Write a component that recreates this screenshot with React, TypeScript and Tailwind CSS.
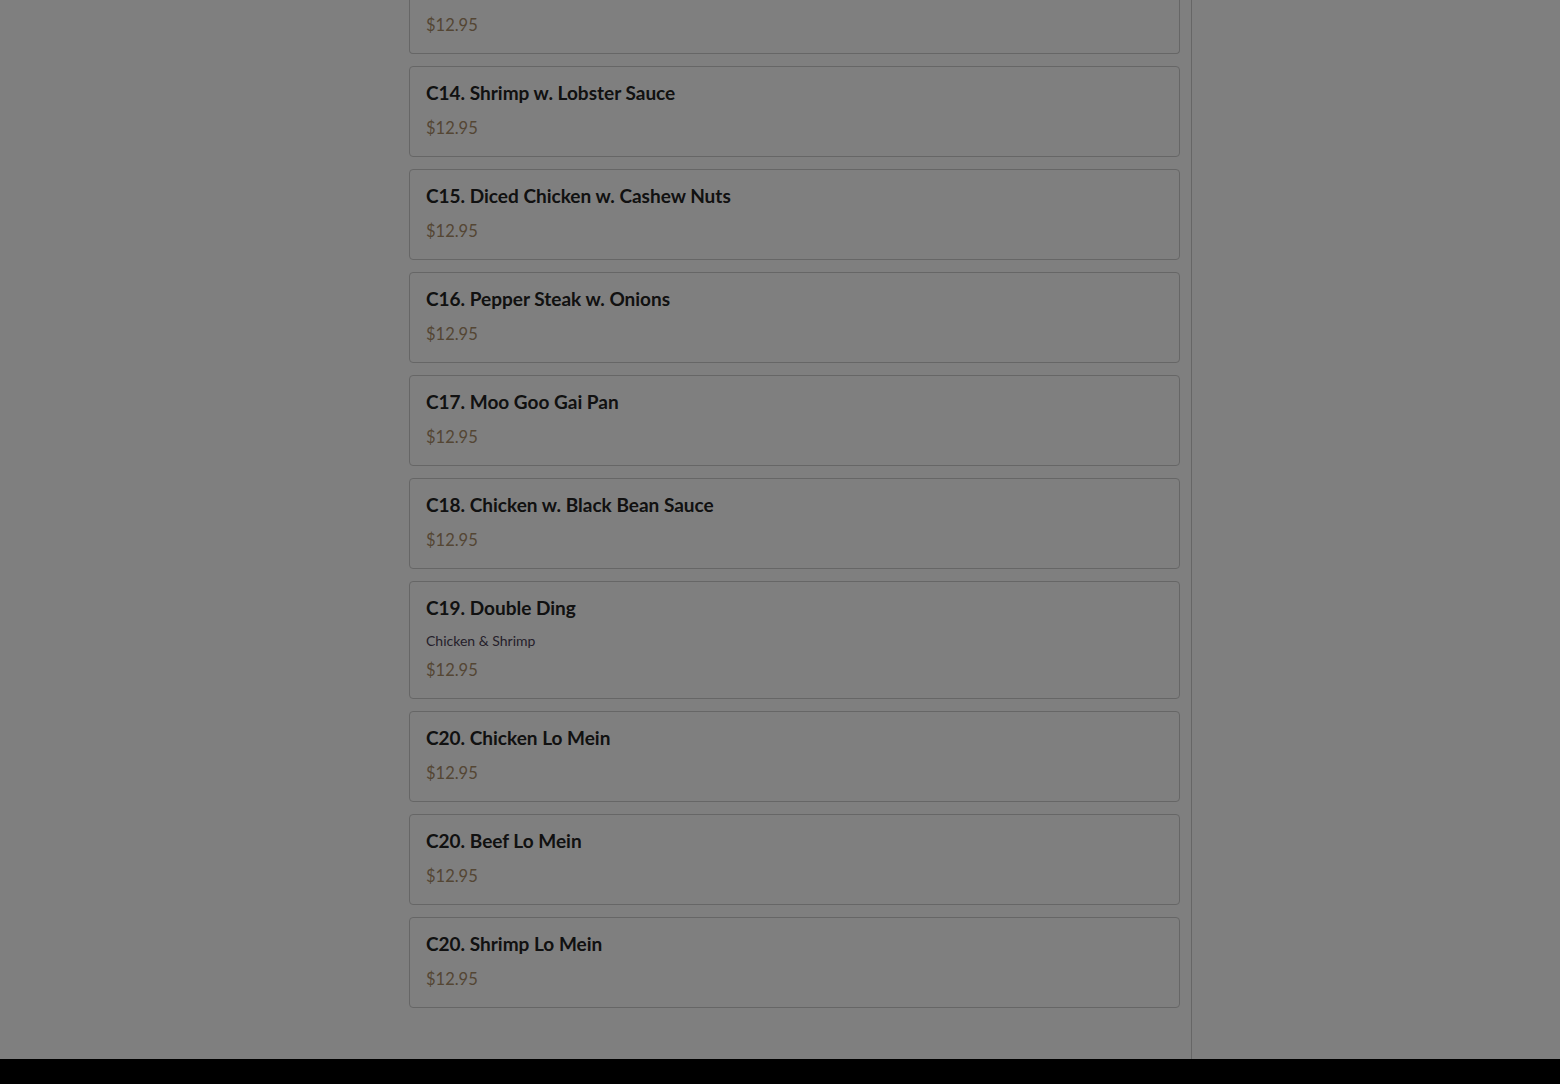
import React from 'react';

interface MenuItem {
  code: string;
  name: string;
  note?: string;
  price: string;
}

const items: MenuItem[] = [
  { code: 'C14', name: 'Shrimp w. Lobster Sauce', price: '$12.95' },
  { code: 'C15', name: 'Diced Chicken w. Cashew Nuts', price: '$12.95' },
  { code: 'C16', name: 'Pepper Steak w. Onions', price: '$12.95' },
  { code: 'C17', name: 'Moo Goo Gai Pan', price: '$12.95' },
  { code: 'C18', name: 'Chicken w. Black Bean Sauce', price: '$12.95' },
  { code: 'C19', name: 'Double Ding', note: 'Chicken & Shrimp', price: '$12.95' },
  { code: 'C20', name: 'Chicken Lo Mein', price: '$12.95' },
  { code: 'C20', name: 'Beef Lo Mein', price: '$12.95' },
  { code: 'C20', name: 'Shrimp Lo Mein', price: '$12.95' },
];

const Price: React.FC<{ value: string }> = ({ value }) => (
  <p className="text-[16.5px] leading-6 text-[#a88c68]">{value}</p>
);

const MenuCard: React.FC<{ item: MenuItem }> = ({ item }) => (
  <div className="rounded border border-[#cccccc] bg-white px-4 py-4">
    <h3 className="mb-[14px] text-[19px] font-bold leading-[19px] text-[#222222]">
      {item.code}. {item.name}
    </h3>
    {item.note && (
      <p className="mb-[7px] text-[14px] leading-5 text-[#4a3f55]">{item.note}</p>
    )}
    <Price value={item.price} />
  </div>
);

export default function App() {
  return (
    <div className="relative h-[1084px] overflow-hidden bg-white font-['Lato','Noto_Sans',sans-serif]">
      <div className="ml-[409px] min-h-[1084px] w-[783px] border-r border-[#cccccc] pr-[11px]">
        <div className="flex flex-col gap-3">
          {/* item scrolled past the top; only its price still shows */}
          <div className="rounded-b border border-t-0 border-[#cccccc] bg-white px-4 pb-4 pt-[13px]">
            <Price value="$12.95" />
          </div>
          {items.map((item, i) => (
            <MenuCard key={i} item={item} />
          ))}
        </div>
      </div>

      {/* modal backdrop */}
      <div className="fixed inset-0 bg-black/50" />

      <div className="fixed bottom-0 left-0 right-0 h-[25px] bg-black" />
    </div>
  );
}
